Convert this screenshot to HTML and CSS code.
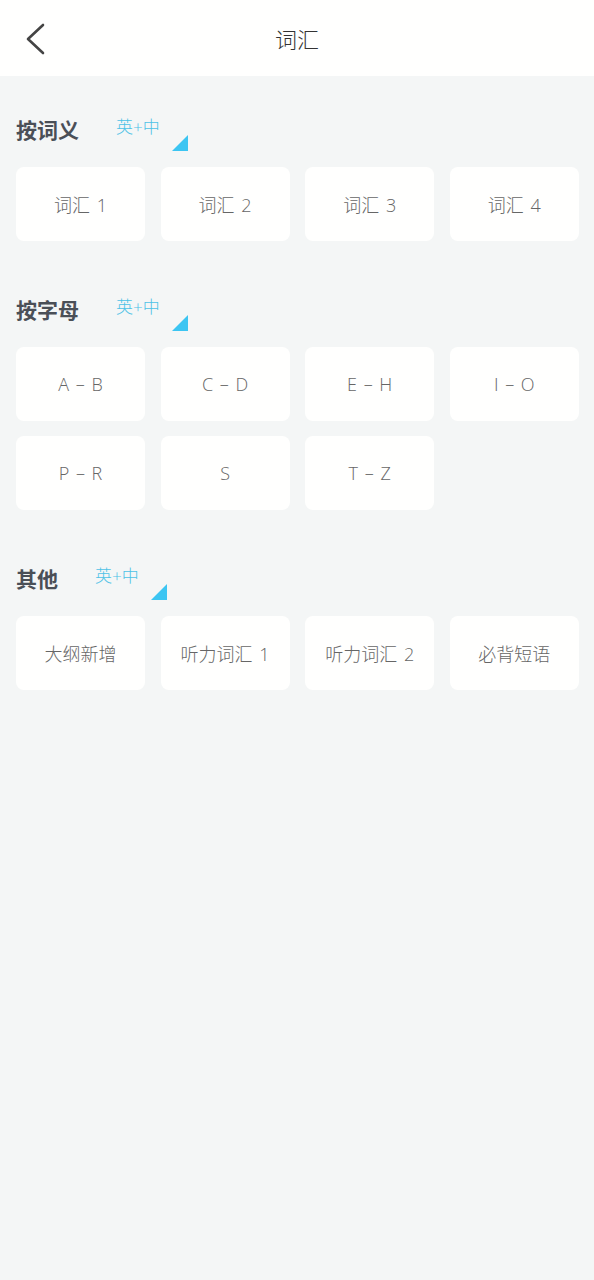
FILE: index.html
```html
<!DOCTYPE html>
<html lang="zh">
<head>
<meta charset="utf-8">
<title>词汇</title>
<link rel="stylesheet" href="styles.css">
</head>
<body>
<header class="topbar">
  <button class="back" aria-label="返回">
    <svg width="20" height="32" viewBox="0 0 20 32"><polyline points="17,2 2,16 17,30" fill="none" stroke="#444" stroke-width="2.6" stroke-linecap="round" stroke-linejoin="round"/></svg>
  </button>
  <h1 class="title">词汇</h1>
</header>
<main class="content">
  <section class="section">
    <div class="sec-head">
      <h2 class="sec-title">按词义</h2>
      <span class="mode">英+中<i class="tri"></i></span>
    </div>
    <div class="grid">
      <div class="card">词汇 1</div>
      <div class="card">词汇 2</div>
      <div class="card">词汇 3</div>
      <div class="card">词汇 4</div>
    </div>
  </section>
  <section class="section">
    <div class="sec-head">
      <h2 class="sec-title">按字母</h2>
      <span class="mode">英+中<i class="tri"></i></span>
    </div>
    <div class="grid">
      <div class="card">A – B</div>
      <div class="card">C – D</div>
      <div class="card">E – H</div>
      <div class="card">I – O</div>
      <div class="card">P – R</div>
      <div class="card">S</div>
      <div class="card">T – Z</div>
    </div>
  </section>
  <section class="section">
    <div class="sec-head">
      <h2 class="sec-title">其他</h2>
      <span class="mode">英+中<i class="tri"></i></span>
    </div>
    <div class="grid">
      <div class="card">大纲新增</div>
      <div class="card">听力词汇 1</div>
      <div class="card">听力词汇 2</div>
      <div class="card">必背短语</div>
    </div>
  </section>
</main>
</body>
</html>
```
FILE: styles.css
```css
html, body {
  margin: 0;
  padding: 0;
}
body {
  background: #f4f6f6;
  font-family: "Noto Sans CJK SC", "Noto Sans", sans-serif;
  min-height: 1280px;
}
.topbar {
  height: 76px;
  background: #fffffe;
  display: flex;
  align-items: center;
  justify-content: center;
  position: relative;
}
.back {
  position: absolute;
  left: 26px;
  top: 23px;
  border: 0;
  background: none;
  padding: 0;
  width: 20px;
  height: 32px;
}
.back svg { display: block; }
.title {
  margin: 0;
  font-size: 22px;
  font-weight: 300;
  color: #333;
  line-height: 1;
}
.content {
  padding: 34px 16px 0;
}
.section {
  margin-bottom: 49px;
}
.sec-head {
  display: flex;
  align-items: center;
  height: 38px;
  margin-bottom: 19px;
}
.sec-title {
  margin: 0;
  font-size: 21px;
  font-weight: 700;
  color: #4a4f57;
  line-height: 1;
}
.mode {
  position: relative;
  margin-left: 37px;
  width: 72px;
  height: 38px;
  font-family: "Open Sans", "Noto Sans CJK SC", sans-serif;
  font-size: 17px;
  font-weight: 300;
  color: #4ec2e6;
  line-height: 34px;
}
.tri {
  position: absolute;
  right: 0;
  bottom: -3px;
  width: 0;
  height: 0;
  border-style: solid;
  border-width: 0 0 16px 16px;
  border-color: transparent transparent #3cc5f2 transparent;
}
.grid {
  display: grid;
  grid-template-columns: repeat(4, 129px);
  column-gap: 15.6px;
  row-gap: 15px;
}
.card {
  height: 74px;
  background: #fffffe;
  border-radius: 8px;
  display: flex;
  align-items: center;
  justify-content: center;
  font-family: "Open Sans", "Noto Sans CJK SC", sans-serif;
  font-size: 18px;
  font-weight: 300;
  word-spacing: 2px;
  color: #666;
}
```
